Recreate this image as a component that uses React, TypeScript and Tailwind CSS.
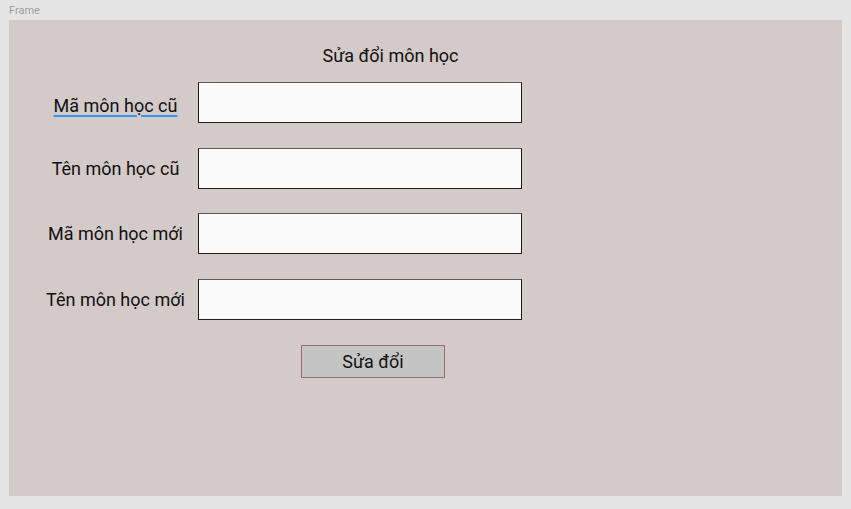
import React from "react";

const rows = [
  { label: "Mã môn học cũ", flagged: true },
  { label: "Tên môn học cũ", flagged: false },
  { label: "Mã môn học mới", flagged: false },
  { label: "Tên môn học mới", flagged: false },
];

export default function App() {
  return (
    <div className="w-[851px] h-[509px] bg-[#e5e5e5] font-['Roboto',sans-serif] text-[#111]">
      <div className="h-[20px] pl-[9px] pt-[4px] text-[11px] leading-[13px] text-[#9c9c9c]">
        Frame
      </div>
      <div className="ml-[9px] w-[833px] h-[476px] bg-[#d3cac9] pt-[25px]">
        <div className="w-[763px] text-center text-[18px] leading-[21px]">
          Sửa đổi môn học
        </div>
        <div className="flex flex-col gap-[24.67px] mt-[16px]">
          {rows.map((row) => (
            <div key={row.label} className="flex items-center h-[41px]">
              <div
                className={
                  row.flagged
                    ? "ml-[28px] mt-[5px] w-[157px] text-center text-[18px] leading-[21px]"
                    : "ml-[28px] w-[157px] text-center text-[18px] leading-[21px]"
                }
              >
                <span
                  className={
                    row.flagged
                      ? "underline decoration-[#2f9be6] decoration-2 underline-offset-[3px]"
                      : ""
                  }
                >
                  {row.label}
                </span>
              </div>
              <input
                type="text"
                className="ml-[4px] w-[324px] h-[41px] bg-[#fafafa] border border-[#1e1e1e] border-t-[#5a5a5a] outline-none"
              />
            </div>
          ))}
        </div>
        <button className="mt-[25px] ml-[292px] w-[144px] h-[33px] bg-[#c4c4c4] border border-[#a06a6e] text-[18px] leading-[21px] text-[#111]">
          Sửa đổi
        </button>
      </div>
    </div>
  );
}
